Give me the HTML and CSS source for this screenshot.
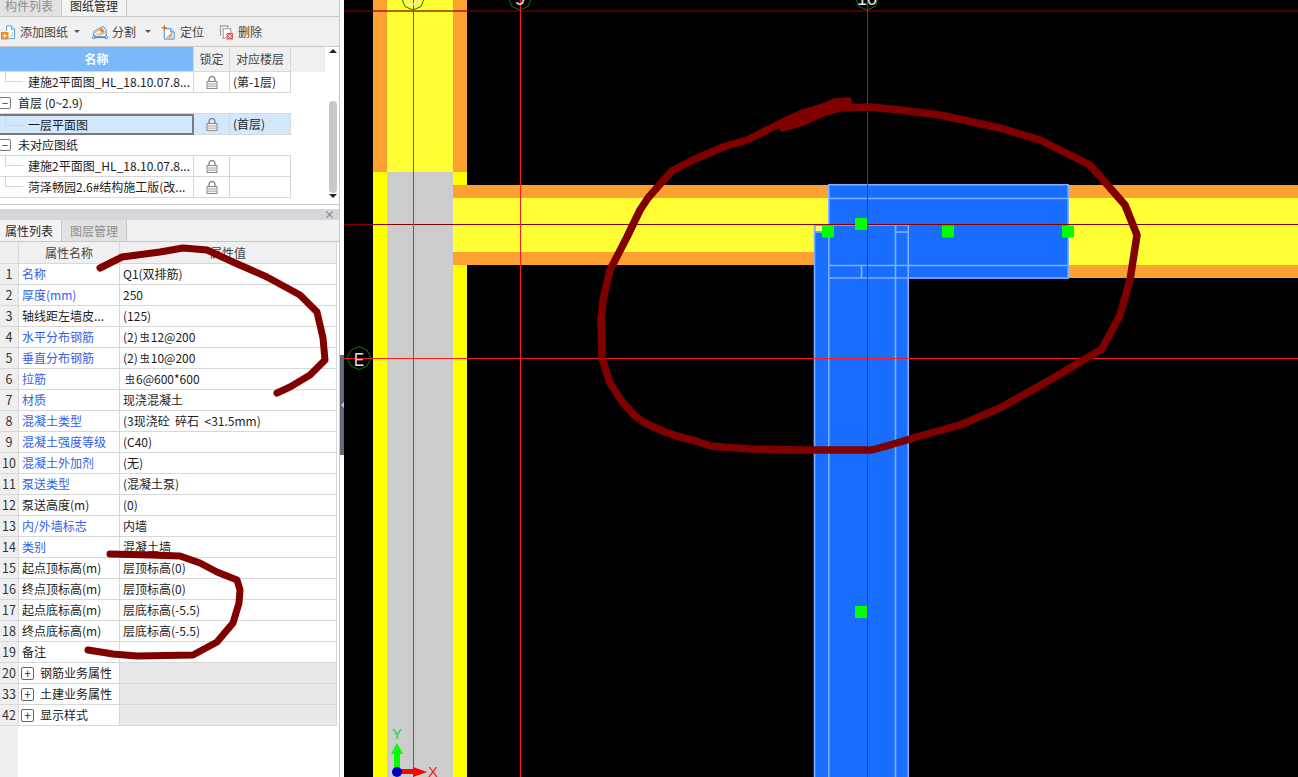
FILE: index.html
```html
<!DOCTYPE html>
<html lang="zh">
<head>
<meta charset="utf-8">
<title>图纸管理</title>
<link rel="stylesheet" href="styles.css">
</head>
<body>
<div class="app">
  <aside class="side">
    <section class="top-panel">
      <div class="tabs tabs-cut">
        <div class="tab">构件列表</div>
        <div class="tab active">图纸管理</div>
      </div>
      <div class="toolbar">
        <div class="tool tool-add">
          <svg class="ico" viewBox="0 0 16 16"><path d="M6 1.500h5l3.500 3.500v10H8" fill="#fff" stroke="#4f97d8"/><path d="M11 1.500V5h3.500" fill="#dbe9f7" stroke="#4f97d8"/><path d="M9 12.500h3V8" fill="none" stroke="#b9c4cf"/><path d="M6 1.500V7" stroke="#4f97d8"/><rect x="0" y="8" width="8" height="8" fill="#ee8a26"/><path d="M1.500 12h5M4 9.500v5" stroke="#fff"/></svg>
          <span>添加图纸</span><i class="caret"></i>
        </div>
        <div class="tool tool-split">
          <svg class="ico ico-wide" viewBox="0 0 17 16"><path d="M2 13V7.500L12 2l3 4v7z" fill="#fff" stroke="#2f82d6"/><path d="M10 3l4 5-4 1-2-3z" fill="#ee8a26"/><path d="M3 11.500l9-3M3 9l6-3.500M7 12l7-3" stroke="#ee9a50"/><path d="M0 14h17" stroke="#2f82d6"/><path d="M1 12h2v3H1zM14 12h2v3h-2z" fill="#fff" stroke="#2f82d6" stroke-width=".8"/></svg>
          <span>分割</span><i class="caret"></i>
        </div>
        <div class="tool tool-locate">
          <svg class="ico" viewBox="0 0 16 16"><path d="M3.500 4.500h7l3.500 3.500v7.500H3.500z" fill="#fff" stroke="#2f82d6"/><path d="M5 14l7-6v6z" fill="#f4a655"/><path d="M10.500 4.500V8H14" fill="#cfe3f6" stroke="#2f82d6"/><path d="M3.500 0l1 2.500L7 3.500 4.500 4.500l-1 2.500-1-2.500L0 3.500l2.500-1z" fill="#ee7a16"/></svg>
          <span>定位</span>
        </div>
        <div class="tool tool-del">
          <svg class="ico" viewBox="0 0 16 16"><path d="M1.500 12V1.500h8v3" fill="none" stroke="#9aa0a6" stroke-width="1.200"/><path d="M7 14.500H4.500v-10h8V9" fill="#fff" stroke="#9aa0a6" stroke-width="1.200"/><rect x="8" y="9" width="7" height="7" fill="#e05a58"/><path d="M9.500 10.500l4 4M13.500 10.500l-4 4" stroke="#fff"/></svg>
          <span>删除</span>
        </div>
      </div>
      <div class="tree-wrap">
        <div class="tree">
          <div class="tree-head">
            <div class="th th-name">名称</div>
            <div class="th">锁定</div>
            <div class="th">对应楼层</div>
          </div>
          <div class="tree-row">
            <div class="td td-name"><i class="branch"></i>建施2平面图_HL_18.10.07.8...</div>
            <div class="td td-lock"><svg class="lock" viewBox="0 0 12 13"><use href="#lock-shape"/></svg></div>
            <div class="td td-floor">(第-1层)</div>
          </div>
          <div class="tree-row tree-group">
            <i class="toggle">−</i><span>首层 (0~2.9)</span>
          </div>
          <div class="tree-row is-selected">
            <div class="td td-name td-focus"><i class="branch"></i>一层平面图</div>
            <div class="td td-lock"><svg class="lock" viewBox="0 0 12 13"><use href="#lock-shape"/></svg></div>
            <div class="td td-floor">(首层)</div>
          </div>
          <div class="tree-row tree-group">
            <i class="toggle">−</i><span>未对应图纸</span>
          </div>
          <div class="tree-row">
            <div class="td td-name"><i class="branch"></i>建施2平面图_HL_18.10.07.8...</div>
            <div class="td td-lock"><svg class="lock" viewBox="0 0 12 13"><use href="#lock-shape"/></svg></div>
            <div class="td td-floor"></div>
          </div>
          <div class="tree-row">
            <div class="td td-name"><i class="branch"></i>菏泽畅园2.6#结构施工版(改...</div>
            <div class="td td-lock"><svg class="lock" viewBox="0 0 12 13"><use href="#lock-shape"/></svg></div>
            <div class="td td-floor"></div>
          </div>
        </div>
        <div class="scrollbar">
          <i class="arrow-up"></i>
          <div class="track"><div class="thumb"></div></div>
          <i class="arrow-down"></i>
        </div>
      </div>
    </section>
    <div class="panel-title"><span class="close">×</span></div>
    <section class="prop-panel">
      <div class="tabs tabs-prop">
        <div class="tab active">属性列表</div>
        <div class="tab">图层管理</div>
      </div>
      <div class="props">
        <div class="prop prop-head"><div class="n"></div><div class="k">属性名称</div><div class="v">属性值</div></div>
        <div class="prop"><div class="n">1</div><div class="k link">名称</div><div class="v">Q1(双排筋)</div></div>
        <div class="prop"><div class="n">2</div><div class="k link">厚度(mm)</div><div class="v">250</div></div>
        <div class="prop"><div class="n">3</div><div class="k">轴线距左墙皮...</div><div class="v">(125)</div></div>
        <div class="prop"><div class="n">4</div><div class="k link">水平分布钢筋</div><div class="v">(2)<sup class="rebar">虫</sup>12@200</div></div>
        <div class="prop"><div class="n">5</div><div class="k link">垂直分布钢筋</div><div class="v">(2)<sup class="rebar">虫</sup>10@200</div></div>
        <div class="prop"><div class="n">6</div><div class="k link">拉筋</div><div class="v"><sup class="rebar">虫</sup>6@600*600</div></div>
        <div class="prop"><div class="n">7</div><div class="k link">材质</div><div class="v">现浇混凝土</div></div>
        <div class="prop"><div class="n">8</div><div class="k link">混凝土类型</div><div class="v">(3现浇砼&nbsp; 碎石&nbsp; &lt;31.5mm)</div></div>
        <div class="prop"><div class="n">9</div><div class="k link">混凝土强度等级</div><div class="v">(C40)</div></div>
        <div class="prop"><div class="n">10</div><div class="k link">混凝土外加剂</div><div class="v">(无)</div></div>
        <div class="prop"><div class="n">11</div><div class="k link">泵送类型</div><div class="v">(混凝土泵)</div></div>
        <div class="prop"><div class="n">12</div><div class="k">泵送高度(m)</div><div class="v">(0)</div></div>
        <div class="prop"><div class="n">13</div><div class="k link">内/外墙标志</div><div class="v">内墙</div></div>
        <div class="prop"><div class="n">14</div><div class="k link">类别</div><div class="v">混凝土墙</div></div>
        <div class="prop"><div class="n">15</div><div class="k">起点顶标高(m)</div><div class="v">层顶标高(0)</div></div>
        <div class="prop"><div class="n">16</div><div class="k">终点顶标高(m)</div><div class="v">层顶标高(0)</div></div>
        <div class="prop"><div class="n">17</div><div class="k">起点底标高(m)</div><div class="v">层底标高(-5.5)</div></div>
        <div class="prop"><div class="n">18</div><div class="k">终点底标高(m)</div><div class="v">层底标高(-5.5)</div></div>
        <div class="prop"><div class="n">19</div><div class="k">备注</div><div class="v"></div></div>
        <div class="prop prop-group"><div class="n">20</div><div class="k"><i class="plus">+</i>钢筋业务属性</div><div class="v"></div></div>
        <div class="prop prop-group"><div class="n">33</div><div class="k"><i class="plus">+</i>土建业务属性</div><div class="v"></div></div>
        <div class="prop prop-group"><div class="n">42</div><div class="k"><i class="plus">+</i>显示样式</div><div class="v"></div></div>
      </div>
    </section>
  </aside>
  <div class="splitter"><div class="handle"><i></i></div></div>
  <main class="canvas">
    <svg class="drawing" viewBox="344 0 954 777" width="954" height="777">
      <rect x="344" y="0" width="954" height="777" fill="#000"/>
      <!-- vertical wall, highlighted upper part -->
      <rect x="373" y="0" width="94" height="172" fill="#ffa033"/>
      <rect x="387" y="0" width="66" height="172" fill="#ffff33"/>
      <!-- vertical wall, lower part -->
      <rect x="373" y="172" width="94" height="605" fill="#ffff00"/>
      <rect x="387" y="172" width="66" height="605" fill="#cccccc"/>
      <!-- horizontal wall -->
      <rect x="453" y="185" width="375" height="13" fill="#ffa033"/>
      <rect x="453" y="198" width="375" height="26" fill="#ffff33"/>
      <rect x="453" y="224" width="361" height="28" fill="#ffff33"/>
      <rect x="453" y="252" width="361" height="13" fill="#ffa033"/>
      <rect x="1068" y="185" width="230" height="13" fill="#ffa033"/>
      <rect x="1068" y="198" width="230" height="67" fill="#ffff33"/>
      <rect x="1068" y="265" width="230" height="13" fill="#ffa033"/>
      <!-- blue T -->
      <rect x="828" y="184" width="241" height="95" fill="#1a6eff"/>
      <rect x="814" y="224" width="95" height="553" fill="#1a6eff"/>
      <g class="edge">
        <path d="M828.800 224V184.800H1068.200V278H908"/>
        <path d="M828 198.500H1068"/>
        <path d="M828 265.500H1068"/>
        <path d="M828 278H908"/>
        <path d="M814.500 777V225H908.200V777"/>
        <path d="M828.800 224V777"/>
        <path d="M895.500 224V777"/>
        <path d="M895 232H908"/>
        <path d="M861.500 265V278"/>
        <path d="M814 232H828"/>
      </g>
      <rect x="815.500" y="226" width="6.500" height="5" fill="#ffff66"/>
      <!-- axis lines -->
      <path class="axis-dim" d="M344 11H1298"/>
      <path class="axis-dark" d="M344 224.500H1298"/>
      <path class="axis" d="M344 358.500H1298"/>
      <path class="axis" d="M413.500 0V777"/>
      <path class="axis" d="M520.500 0V777"/>
      <path class="axis-mid" d="M867.500 0V777"/>
      <!-- grips -->
      <g fill="#00ff00">
        <rect x="822" y="225.500" width="12" height="12"/>
        <rect x="855" y="218" width="12" height="12"/>
        <rect x="942" y="225.500" width="12" height="12"/>
        <rect x="1062" y="225.500" width="12" height="12"/>
        <rect x="855" y="606" width="12" height="12"/>
      </g>
      <!-- axis labels -->
      <g class="bubble">
        <polygon points="413,10 405,6.500 402,-1 405,-9 413,-12 421,-9 424,-1 421,6.500"/>
        <polygon points="520,10 512,6.500 509,-1 512,-9 520,-12 528,-9 531,-1 528,6.500"/>
        <polygon points="867,10 859,6.500 856,-1 859,-9 867,-12 875,-9 878,-1 875,6.500"/>
        <polygon points="359,346.500 367,350 371,358 367,366 359,369.500 351,366 347,358 351,350"/>
      </g>
      <text class="bubble-text" x="413" y="5" textLength="10" lengthAdjust="spacingAndGlyphs">8</text>
      <text class="bubble-text" x="520" y="5" textLength="10" lengthAdjust="spacingAndGlyphs">9</text>
      <text class="bubble-text" x="867" y="5" textLength="20" lengthAdjust="spacingAndGlyphs">10</text>
      <text class="bubble-text" x="359" y="366" textLength="10" lengthAdjust="spacingAndGlyphs">E</text>
      <!-- UCS -->
      <path d="M397 772V753" stroke="#00ff00" stroke-width="6"/>
      <polygon points="397,743 403,754 391,754" fill="#00ff00"/>
      <path d="M397 771.500H415" stroke="#ff0000" stroke-width="5"/>
      <polygon points="427,772 413,767 413,777" fill="#ff0000"/>
      <circle cx="397" cy="772" r="5" fill="#0000c8"/>
      <text class="ucs ucs-y" x="397" y="739">Y</text>
      <text class="ucs ucs-x" x="433" y="777">X</text>
    </svg>
  </main>
  <svg class="ink" viewBox="0 0 1298 777" width="1298" height="777">
    <path class="ink-big" d="M848 101L835 102L823 107L803 113L787 120L757 135L747 140L723 147L693 160L672 171L662 182L648 198L640 210L627 237L610 270L603 300L601 320L602 358L610 383L623 403L635 416L645 423L665 432L680 437L696 441L710 446L750 449L800 450L872 450L890 445L920 436L960 425L1000 408L1050 380L1102 349L1120 315L1130 280L1137 235L1125 205L1090 165L1040 140L1000 128L940 115L900 110L870 107L840 108L820 114L800 123L783 128"/>
    <path class="ink-small" d="M100 268L122 257L160 252L183 248L207 250L233 262L267 277L300 295L317 312L323 338L325 360L310 375L290 387L277 393"/>
    <path class="ink-small" d="M110 554L150 555L180 556L200 563L217 572L237 580L240 590L239 603L233 623L217 642L193 655L137 656L113 654L88 650"/>
  </svg>
</div>
<svg class="defs" width="0" height="0">
  <symbol id="lock-shape" viewBox="0 0 12 13">
    <path d="M3 6V3.500a3 3 0 0 1 6 0V6" fill="none" stroke="#8a8a8a" stroke-width="1.400"/>
    <rect x="1" y="5.500" width="10" height="7" fill="#f6f6f6" stroke="#8a8a8a"/>
    <path d="M1 8h10M1 10.200h10" stroke="#a8a8a8"/>
  </symbol>
</svg>
</body>
</html>
```

FILE: styles.css
```css
* { box-sizing: border-box; }
html, body { margin: 0; padding: 0; height: 100%; overflow: hidden; background: #fff; }
body { font: 12px/1 "Noto Sans CJK SC", "Liberation Sans", sans-serif; color: #1c1c1c; }
i { font-style: normal; }

.app { position: relative; display: flex; width: 1298px; height: 777px; overflow: hidden; }
.defs { position: absolute; }

/* left column */
.side { width: 340px; flex: none; display: flex; flex-direction: column; background: #fff; border-right: 1px solid #c8c8c8; }

.tabs { display: flex; background: #f0f0f0; border-bottom: 1px solid #c8c8c8; }
.tab { width: 62px; text-align: left; padding-left: 5px; background: #e2e2e2; color: #8c8c8c; border-right: 1px solid #c8c8c8; }
.tab:nth-child(2) { width: 65px; padding-left: 8px; }
.tab.active { background: #f3f3f3; color: #2a2a2a; }
.tabs-cut { height: 17px; }
.tabs-cut .tab { line-height: 12px; }
.tabs-prop { height: 22px; }
.tabs-prop .tab { line-height: 21px; }

.top-panel { height: 205px; flex: none; border-bottom: 1px solid #c8c8c8; display: flex; flex-direction: column; }

.toolbar { height: 30px; flex: none; display: flex; align-items: center; background: #f0f0f0; border-bottom: 1px solid #c8c8c8; color: #444; }
.tool { display: flex; align-items: center; height: 100%; }
.tool-add { padding-left: 1px; width: 92px; }
.tool-add .ico { margin-right: 4px; }
.tool-split { width: 69px; }
.tool-split .ico { margin-right: 4px; }
.tool-locate { width: 58px; padding-left: 0; }
.tool-locate .ico { margin-right: 4px; }
.tool-del { padding-left: 0; }
.tool-del .ico { margin-right: 4px; }
.ico { width: 15px; height: 16px; flex: none; }
.ico-wide { width: 16px; }
.caret { width: 0; height: 0; margin-left: 6px; border: 3px solid transparent; border-top-color: #555; border-bottom: 0; }
.tool-split .caret { margin-left: 9px; }

.tree-wrap { flex: 1; display: flex; }
.tree { width: 325px; flex: none; }
.tree-head { display: grid; grid-template-columns: 194px 36px 61px; height: 25px; background: #f0f0f0; }
.th { display: flex; align-items: center; justify-content: center; border-right: 1px solid #d8d8d8; border-bottom: 1px solid #d8d8d8; color: #444; }
.th-name { background: #7ab8f8; color: #fff; font-weight: 700; }

.tree-row { display: grid; grid-template-columns: 194px 36px 61px; height: 21px; width: 291px; border-bottom: 1px solid #d8d8d8; }
.td { display: flex; align-items: center; height: 20px; border-right: 1px solid #d8d8d8; white-space: nowrap; overflow: hidden; }
.td-name { padding-left: 28px; position: relative; }
.td-lock { justify-content: center; }
.td-floor { padding-left: 3px; }
.branch { position: absolute; left: 5px; top: 0; width: 18px; height: 10px; border-left: 1px solid #d4d4d4; border-bottom: 1px solid #d4d4d4; }
.lock { width: 12px; height: 13px; }

.tree-group { display: flex; align-items: center; gap: 7px; height: 21px; }
.toggle { width: 12px; height: 12px; flex: none; margin-left: -1px; border: 1px solid #777; border-radius: 2px; background: #fff; display: flex; align-items: center; justify-content: center; color: #333; font-size: 11px; }

.is-selected .td { background: #d3e8fd; }
.is-selected .td-focus { border: 2px solid #7a7a7a; border-left-width: 0; height: 21px; margin-bottom: -1px; background: #d3e8fd; }

.scrollbar { flex: 1; display: flex; flex-direction: column; align-items: center; padding: 2px 0 5px 1px; height: 156px; }
.arrow-up, .arrow-down { flex: none; width: 0; height: 0; border: 4px solid transparent; }
.arrow-up { border-bottom: 4px solid #222; border-top: 0; }
.arrow-down { border-top: 4px solid #222; border-bottom: 0; }
.track { flex: 1; width: 100%; display: flex; justify-content: center; padding-top: 48px; }
.thumb { width: 8px; height: 92px; background: #c8c8c8; border-radius: 4px; }

.panel-title { height: 15px; flex: none; padding: 4px 4px 0 0; background: linear-gradient(#fff 0 4px, #d4d6da 4px); display: flex; justify-content: flex-end; }
.close { color: #8a8e94; font-size: 11px; line-height: 11px; font-weight: 700; }

.prop-panel { flex: 1; display: flex; flex-direction: column; min-height: 0; }
.tabs-prop { border-top: 0; }
.props { flex: 1; width: 337px; background: linear-gradient(90deg, #efefef 18px, #fff 18px); }
.prop { display: grid; grid-template-columns: 19px 101px 217px; height: 21px; }
.prop > div { display: flex; align-items: center; border-bottom: 1px solid #d8d8d8; border-right: 1px solid #d8d8d8; white-space: nowrap; }
.prop .n { justify-content: center; background: #efefef; color: #333; font-size: 12.500px; }
.prop .k { padding-left: 3px; color: #1c1c1c; }
.prop .k.link { color: #2f62e8; }
.prop .v { padding-left: 3px; color: #1c1c1c; }
.prop-head { height: 22px; }
.prop-head > div { background: #f0f0f0; justify-content: center; color: #444; }
.prop-head .k, .prop-head .v { justify-content: center; padding-left: 0; color: #444; }
.rebar { font-size: 10px; line-height: 1; vertical-align: 5px; margin: 0 1px 0 2px; }
.prop-group .v { background: #e9e9e9; }
.plus { width: 13px; height: 13px; margin: 0 6px 0 -1px; flex: none; border: 1px solid #666; border-radius: 2px; display: flex; align-items: center; justify-content: center; font-size: 12px; line-height: 1; color: #333; }

/* splitter */
.splitter { width: 4px; flex: none; background: #fff; padding-top: 355px; }
.handle { width: 4px; height: 100px; background: #606a78; position: relative; }
.handle i { position: absolute; left: 1px; top: 47px; width: 0; height: 0; border: 3px solid transparent; border-right-color: #c4c8ce; border-left: 0; }

/* canvas */
.canvas { flex: 1; overflow: hidden; background: #000; }
.drawing { display: block; }
.edge path { fill: none; stroke: #7fb0ff; stroke-width: 1.600; }
.axis { stroke: #ff1a1a; stroke-width: 1; fill: none; }
.axis-mid { stroke: #b01818; stroke-width: 1; fill: none; }
.axis-dark { stroke: #8a0000; stroke-width: 1; fill: none; }
.axis-dim { stroke: #800000; stroke-opacity: .6; stroke-width: 2; fill: none; }
.bubble polygon { fill: none; stroke: #0a7a0a; stroke-width: 1; }
.bubble-text { fill: #e8e8e8; font: 19px "Liberation Sans", sans-serif; text-anchor: middle; }
.ucs { font: 15px "Liberation Sans", sans-serif; text-anchor: middle; }
.ucs-x { fill: #ff2020; }
.ucs-y { fill: #00e040; }

/* freehand annotation over everything */
.ink { position: absolute; left: 0; top: 0; pointer-events: none; }
.ink path { fill: none; stroke: #800000; stroke-linecap: round; stroke-linejoin: round; }
.ink-big { stroke-width: 7.500; }
.ink-small { stroke-width: 7; }
```
